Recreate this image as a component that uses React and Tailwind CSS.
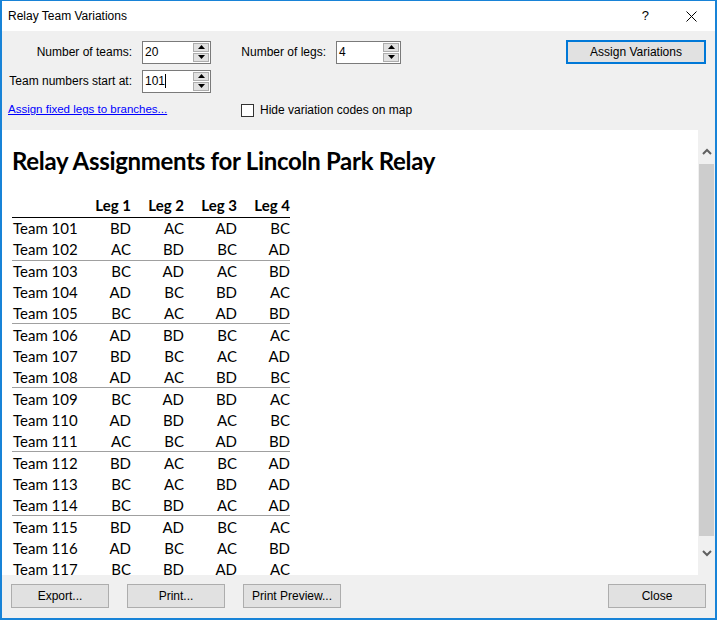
import React from 'react';

const rows = [
  ['Team 101', 'BD', 'AC', 'AD', 'BC'],
  ['Team 102', 'AC', 'BD', 'BC', 'AD'],
  ['Team 103', 'BC', 'AD', 'AC', 'BD'],
  ['Team 104', 'AD', 'BC', 'BD', 'AC'],
  ['Team 105', 'BC', 'AC', 'AD', 'BD'],
  ['Team 106', 'AD', 'BD', 'BC', 'AC'],
  ['Team 107', 'BD', 'BC', 'AC', 'AD'],
  ['Team 108', 'AD', 'AC', 'BD', 'BC'],
  ['Team 109', 'BC', 'AD', 'BD', 'AC'],
  ['Team 110', 'AD', 'BD', 'AC', 'BC'],
  ['Team 111', 'AC', 'BC', 'AD', 'BD'],
  ['Team 112', 'BD', 'AC', 'BC', 'AD'],
  ['Team 113', 'BC', 'AC', 'BD', 'AD'],
  ['Team 114', 'BC', 'BD', 'AC', 'AD'],
  ['Team 115', 'BD', 'AD', 'BC', 'AC'],
  ['Team 116', 'AD', 'BC', 'AC', 'BD'],
  ['Team 117', 'BC', 'BD', 'AD', 'AC'],
];

// lines drawn under these rows
const breaks = [1, 4, 7, 10, 13];

function Spin({value, caret, width}) {
  return (
    <div className={`relative h-[23px] ${width} bg-white border border-[#7a7a7a] flex items-center`}>
      <span className="pl-[2px] text-[12px] leading-none text-black">{value}</span>
      {caret && <span className="w-px h-[14px] bg-black" />}
      <div className="absolute right-[1px] top-[1px] bottom-[1px] w-[16px] flex flex-col gap-px">
        <div className="flex-1 bg-[#e1e1e1] border border-[#adadad] flex items-center justify-center">
          <svg width="7" height="4" viewBox="0 0 7 4"><path d="M0 4 L3.5 0 L7 4 Z" fill="#000" /></svg>
        </div>
        <div className="flex-1 bg-[#e1e1e1] border border-[#adadad] flex items-center justify-center">
          <svg width="7" height="4" viewBox="0 0 7 4"><path d="M0 0 L3.5 4 L7 0 Z" fill="#000" /></svg>
        </div>
      </div>
    </div>
  );
}

function Btn({children, className}) {
  return (
    <button className={`h-[24px] w-[98px] bg-[#e1e1e1] border border-[#adadad] text-[12px] text-black ${className || ''}`}>
      {children}
    </button>
  );
}

export default function App() {
  return (
    <div className="w-[717px] h-[620px] flex flex-col border-x-2 border-b-2 border-t border-[#1883d7] bg-[#f0f0f0] font-['Liberation_Sans',sans-serif] overflow-hidden">
      <div className="h-[30px] bg-white flex items-center pl-[6px] shrink-0">
        <span className="text-[12px] text-black">Relay Team Variations</span>
        <span className="ml-auto mr-[37px] text-[13px] text-black">?</span>
        <svg className="mr-[18px]" width="11" height="11" viewBox="0 0 11 11">
          <path d="M0.5 0.5 L10.5 10.5 M10.5 0.5 L0.5 10.5" stroke="#000" strokeWidth="1" />
        </svg>
      </div>

      <div className="h-[99px] shrink-0 pl-[6px] pt-[9px] flex flex-col text-[12px] text-black">
        <div className="flex items-center h-[24px]">
          <span className="w-[124px] text-right">Number of teams:</span>
          <div className="ml-[10px]"><Spin value="20" width="w-[69px]" /></div>
          <span className="ml-[30px] w-[85px] text-right">Number of legs:</span>
          <div className="ml-[10px]"><Spin value="4" width="w-[65px]" /></div>
          <button className="ml-auto mr-[9px] h-[24px] w-[140px] bg-[#e1e1e1] border-2 border-[#0078d7] text-[12px]">
            Assign Variations
          </button>
        </div>
        <div className="flex items-center h-[24px] mt-[5px]">
          <span className="w-[124px] text-right">Team numbers start at:</span>
          <div className="ml-[10px]"><Spin value="101" caret width="w-[69px]" /></div>
        </div>
        <div className="flex items-center mt-[9px] h-[16px]">
          <span className="w-[233px] text-[11.5px] text-[#0000ff] underline">Assign fixed legs to branches...</span>
          <span className="w-[13px] h-[13px] bg-white border border-[#333]" />
          <span className="ml-[6px]">Hide variation codes on map</span>
        </div>
      </div>

      <div className="h-[445px] shrink-0 flex">
        <div className="flex-1 bg-white overflow-hidden pl-[10px] pt-[17px] font-['Lato',sans-serif] text-black">
          <div className="text-[24px] font-bold leading-[28px] tracking-[-0.3px]">Relay Assignments for Lincoln Park Relay</div>
          <div className="mt-[19px] w-[278px] flex flex-col text-[15px]">
            <div className="flex h-[24px] items-center border-b border-black font-bold">
              <span className="w-[66px]" />
              <span className="w-[53px] text-right">Leg 1</span>
              <span className="w-[53px] text-right">Leg 2</span>
              <span className="w-[53px] text-right">Leg 3</span>
              <span className="w-[53px] text-right">Leg 4</span>
            </div>
            {rows.map((r, i) => (
              <div key={r[0]} className={`flex h-[21.3px] items-center shrink-0 ${breaks.includes(i) ? 'border-b border-[#a0a0a0]' : ''}`}>
                <span className="w-[66px] pl-px">{r[0]}</span>
                <span className="w-[53px] text-right">{r[1]}</span>
                <span className="w-[53px] text-right">{r[2]}</span>
                <span className="w-[53px] text-right">{r[3]}</span>
                <span className="w-[53px] text-right">{r[4]}</span>
              </div>
            ))}
          </div>
        </div>
        <div className="w-[17px] flex flex-col bg-[#f0f0f0]">
          <div className="h-[34px] flex items-center justify-center pt-[8px]">
            <svg width="10" height="7" viewBox="0 0 10 7"><path d="M1 6 L5 2 L9 6" stroke="#606060" strokeWidth="2" fill="none" /></svg>
          </div>
          <div className="h-[372px] mx-[1px] bg-[#cdcdcd]" />
          <div className="flex-1 flex items-center justify-center pb-[4px]">
            <svg width="10" height="7" viewBox="0 0 10 7"><path d="M1 1 L5 5 L9 1" stroke="#606060" strokeWidth="2" fill="none" /></svg>
          </div>
        </div>
      </div>

      <div className="flex-1 flex items-start pt-[9px] pl-[9px]">
        <Btn>Export...</Btn>
        <Btn className="ml-[18px]">Print...</Btn>
        <Btn className="ml-[18px]">Print Preview...</Btn>
        <Btn className="ml-auto mr-[9px]">Close</Btn>
      </div>
    </div>
  );
}
